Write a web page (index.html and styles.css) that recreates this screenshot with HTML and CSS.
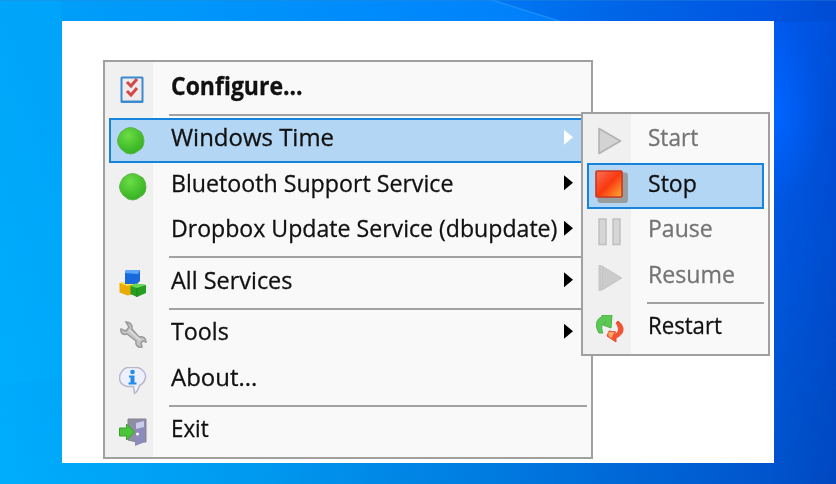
FILE: index.html
```
<!DOCTYPE html>
<html lang="en">
<head>
<meta charset="utf-8">
<title>Service tray menu</title>
<link rel="stylesheet" href="styles.css">
</head>
<body>
<svg class="wallpaper" viewBox="0 0 836 484" preserveAspectRatio="none">
  <defs>
    <linearGradient id="sky" x1="0" y1="0" x2="1" y2="0"><stop offset="0" stop-color="#00a2f8"/><stop offset=".3" stop-color="#0093fb"/><stop offset=".62" stop-color="#0082fc"/><stop offset=".75" stop-color="#006cf0"/><stop offset=".92" stop-color="#005cf2"/><stop offset="1" stop-color="#0050dc"/></linearGradient>
    <linearGradient id="low" x1="0" y1="0" x2="1" y2="0"><stop offset="0" stop-color="#00adfc"/><stop offset=".3" stop-color="#009af0"/><stop offset=".6" stop-color="#0079de"/><stop offset=".92" stop-color="#0054cc"/><stop offset="1" stop-color="#0048c0"/></linearGradient>
    <linearGradient id="fade" x1="0" y1="0" x2="0" y2="1"><stop offset="0" stop-color="#000"/><stop offset="1" stop-color="#fff"/></linearGradient>
    <mask id="down"><rect width="836" height="484" fill="url(#fade)"/></mask>
    <linearGradient id="shade" x1="0" y1="0" x2="1" y2="0"><stop offset="0" stop-color="#0068e8" stop-opacity=".45"/><stop offset="1" stop-color="#0048cc" stop-opacity=".5"/></linearGradient>
    <radialGradient id="glow"><stop offset="0" stop-color="#0066ff"/><stop offset="1" stop-color="#0060ff" stop-opacity="0"/></radialGradient>
  </defs>
  <rect width="836" height="484" fill="url(#sky)"/>
  <rect width="836" height="484" fill="url(#low)" mask="url(#down)"/>
  <path d="M492 0L562 22H836V0Z" fill="url(#shade)"/>
  <path d="M492 0L562 22" stroke="#2c9cff" stroke-width="1.5" opacity=".6"/>
  <ellipse cx="772" cy="112" rx="50" ry="95" fill="url(#glow)"/>
  <path d="M0 386L62 377V0H0Z" fill="#00b4ff" opacity=".25"/>
  <path d="M0 0H836" stroke="#2f86cf" stroke-width="1.6" opacity=".5"/>
</svg>
<main class="panel">
  <nav class="menu services">
    <div class="item"><svg class="icon" viewBox="0 0 28 28"><rect x="1.500" y=".5" width="23" height="26.500" rx="1.500" fill="#3a8ad0"/><rect x="3.500" y="2.500" width="19" height="22" fill="#efebec"/><path d="M8 6l4 4 6-7M8 15l4 4 6-7" fill="none" stroke="#d04848" stroke-width="3"/></svg><b class="label configure">Configure...</b></div>
    <hr class="rule">
    <div class="item active"><svg class="icon lead" viewBox="0 0 28 28"><use href="#running"/></svg><span class="label windows">Windows Time</span><i class="arrow"></i></div>
    <div class="item"><svg class="icon" viewBox="0 0 28 28"><defs><radialGradient id="green" cx=".4" cy=".3" r=".7"><stop offset="0" stop-color="#6bdc45"/><stop offset="1" stop-color="#34b122"/></radialGradient><path id="running" d="M9 1.500Q13.500-.5 18 1.500L24 5Q27 9 27 14T24 22L18 26Q14 28 9 26L4 22Q.5 18 .5 14T4 5Z" stroke-linejoin="round" fill="url(#green)" stroke="#62b350"/></defs><use href="#running"/></svg><span class="label bluetooth">Bluetooth Support Service</span><i class="arrow"></i></div>
    <div class="item"><span class="icon"></span><span class="label dropbox">Dropbox Update Service (dbupdate)</span><i class="arrow"></i></div>
    <hr class="rule">
    <div class="item"><svg class="icon" viewBox="0 0 28 28"><path d="M.5 13l8-1.500 5 3v10l-5 1-8-3z" fill="#e8ad00"/><path d="M.5 13l8-1.500 5 3-5 1.500z" fill="#ffe14a"/><path d="M6 1l2-1h13v11l-3 3H6z" fill="#1769dc"/><path d="M6 1l2-1h13l-2 4-13-1z" fill="#5ca6fa"/><path d="M11.500 16l5-2.500L27 15v8l-9 4-6.500-3z" fill="#269e22"/><path d="M11.500 16l5-2.500L27 15l-9 3z" fill="#68d955"/><path d="M18 18v9" stroke="#17841a"/></svg><span class="label all">All Services</span><i class="arrow"></i></div>
    <hr class="rule">
    <div class="item"><svg class="icon" viewBox="0 0 28 28"><path d="M7 1l3 5-3 4-5-2c-1 5 3 6 6 5l9 7c-1 4 2 7 6 6l-1-4 2-2 3 1c0-4-3-6-7-5l-7-8c1-4-2-7-6-7z" fill="#c4c4c4" stroke="#999" stroke-width="1.500"/><path d="M10 9l11 10" stroke="#dadada" stroke-width="2"/></svg><span class="label tools">Tools</span><i class="arrow"></i></div>
    <div class="item"><svg class="icon" viewBox="0 0 28 28"><path d="M8 .5h11c5 2 8 6 7.500 10-1 5-4 7-6 8-1 4-2 6-5 8l-1-7H8C3 18 .5 15 .5 11S4 1.500 8 .5z" fill="#eef0ff" stroke="#b6b8cb" stroke-width="1.500"/><circle cx="13.500" cy="5" r="2.300" fill="#238ceb"/><path d="M10 8.500h5.500v7h2v2h-8v-2h2v-5H10z" fill="#238ceb"/></svg><span class="label about">About...</span></div>
    <hr class="rule">
    <div class="item"><svg class="icon" viewBox="0 0 28 28"><path d="M9 1h18v23h-9L9 22z" fill="#8f8e9e" stroke="#85858c"/><path d="M16 4l10-3v23l-10 4z" fill="#8c8bbb"/><path d="M17 5l8-2v6l-8 2z" fill="#c9cbe8"/><circle cx="18.500" cy="16" r="1.500" fill="#fff"/><path d="M.5 10h7V6l8 8-8 8v-4h-7z" fill="#4dc53b" stroke="#35a02d"/></svg><span class="label exit">Exit</span></div>
  </nav>
  <nav class="menu actions">
    <div class="item disabled"><svg class="icon" viewBox="0 0 28 28"><path d="M3 1.500L24.500 14 3 26.500z" fill="#d3d3d3" stroke="#b2b2b2" stroke-width="1.600" stroke-linejoin="round"/></svg><span class="label start">Start</span></div>
    <div class="item active"><svg class="icon stopicon" viewBox="0 0 34 34"><defs><linearGradient id="red" x1="0" y1="0" x2="1" y2="1"><stop offset="0" stop-color="#fa7058"/><stop offset=".5" stop-color="#f93910"/><stop offset="1" stop-color="#ffad32"/></linearGradient></defs><rect x="2.500" y="2.500" width="30.500" height="30.500" rx="3" fill="#999d9e"/><rect x="1" y="1" width="26" height="26" rx="1" fill="url(#red)" stroke="#c73824" stroke-width="1.600"/></svg><span class="label stop">Stop</span></div>
    <div class="item disabled"><svg class="icon" viewBox="0 0 28 28"><path d="M3 1h7v25.500H3zM17 1h7v25.500h-7z" fill="#d6d6d6" stroke="#c0c0c0" stroke-width="1.500"/></svg><span class="label pause">Pause</span></div>
    <div class="item disabled"><svg class="icon" viewBox="0 0 28 28"><path d="M2.500 1h3v26h-3z" fill="#c8c8c8"/><path d="M6 2l19.500 12L6 26z" fill="#cbcbcb" stroke="#c0c0c0"/></svg><span class="label resume">Resume</span></div>
    <hr class="rule">
    <div class="item"><svg class="icon" viewBox="0 0 28 28"><path d="M3 18C-2 10 1 3 6 2V0h10l-1 13-8-3 3-3c-5 1-5 7-3 11z" fill="#5bca55" stroke="#4fb04c"/><path d="M22 6c7 5 7 13-2 17v4l-9-6 2-5 7 1-2 3c6-2 5-8 2-12z" fill="#f5522f" stroke="#e4503a"/><path d="M12.500 17h6l-3 6-3-2z" fill="#ffa866"/></svg><span class="label restart">Restart</span></div>
  </nav>
</main>
</body>
</html>
```
FILE: styles.css
```
* { box-sizing: border-box; }
body {
  margin: 0;
  width: 836px;
  height: 484px;
  overflow: hidden;
  padding: 21px 62px;
  background: #0085f5;
  font-family: "Open Sans", "Noto Sans", sans-serif;
  font-size: 24.5px;
  color: #111;
}
.wallpaper { position: absolute; inset: 0; width: 836px; height: 484px; z-index: -1; }
.panel {
  position: relative;
  width: 712px;
  height: 442px;
  padding: 39px 0 0 41px;
  background: #fff;
}
.menu {
  padding: 4px 3.500px;
  border: 2px solid #a0a0a0;
  background: linear-gradient(90deg, #f0f0f0 48px, #f9f9f9 48px);
}
.services { width: 489.500px; height: 399px; }
.actions {
  position: absolute;
  left: 519px;
  top: 90.500px;
  width: 188.500px;
  height: 244.500px;
  background: linear-gradient(90deg, #f0f0f0 48px, #f9f9f9 48px);
}
.item {
  display: flex;
  align-items: center;
  height: 45.500px;
  padding: 0 9px 0 10px;
}
.actions .item { padding-left: 9px; }
.icon { flex: none; width: 28px; height: 28px; margin: 2px 24.500px 0 0; }
.label {
  flex: none;
  display: block;
  line-height: 34px;
  white-space: nowrap;
  transform-origin: left center;
  margin-top: -6px;
  -webkit-text-stroke: .3px currentColor;
}
.configure { transform: scaleX(.938); }
.windows { transform: scaleX(.978); }
.bluetooth { transform: scaleX(.946); }
.dropbox { transform: scaleX(.943); }
.all { transform: scaleX(.956); }
.tools { transform: scaleX(.95); }
.about { transform: scaleX(.978); }
.exit { transform: scaleX(.91); }
.start { transform: scaleX(.92); }
.stop { transform: scaleX(.94); }
.pause { transform: scaleX(.94); }
.resume { transform: scaleX(.945); }
.restart { transform: scaleX(.905); }
.arrow {
  position: absolute;
  left: 502px;
  margin-top: -6px;
  width: 9px;
  height: 15px;
  background: #000;
  clip-path: polygon(0 0, 100% 50%, 0 100%);
}
.rule { height: 2px; margin: 2px 0 2px 60.500px; border: 0; background: #a2a2a2; }
.active { border: 2px solid #1683dd; background: #b3d6f4; padding-left: 6px; }
.active .arrow { background: #fff; }
.active .lead { margin-right: 26.500px; }
.disabled { color: #747474; }
.actions .active { padding-left: 6px; }
.actions .stopicon { width: 34px; height: 34px; margin-right: 21.500px; }
.actions .stopicon { margin-right: 19.500px; }
```
